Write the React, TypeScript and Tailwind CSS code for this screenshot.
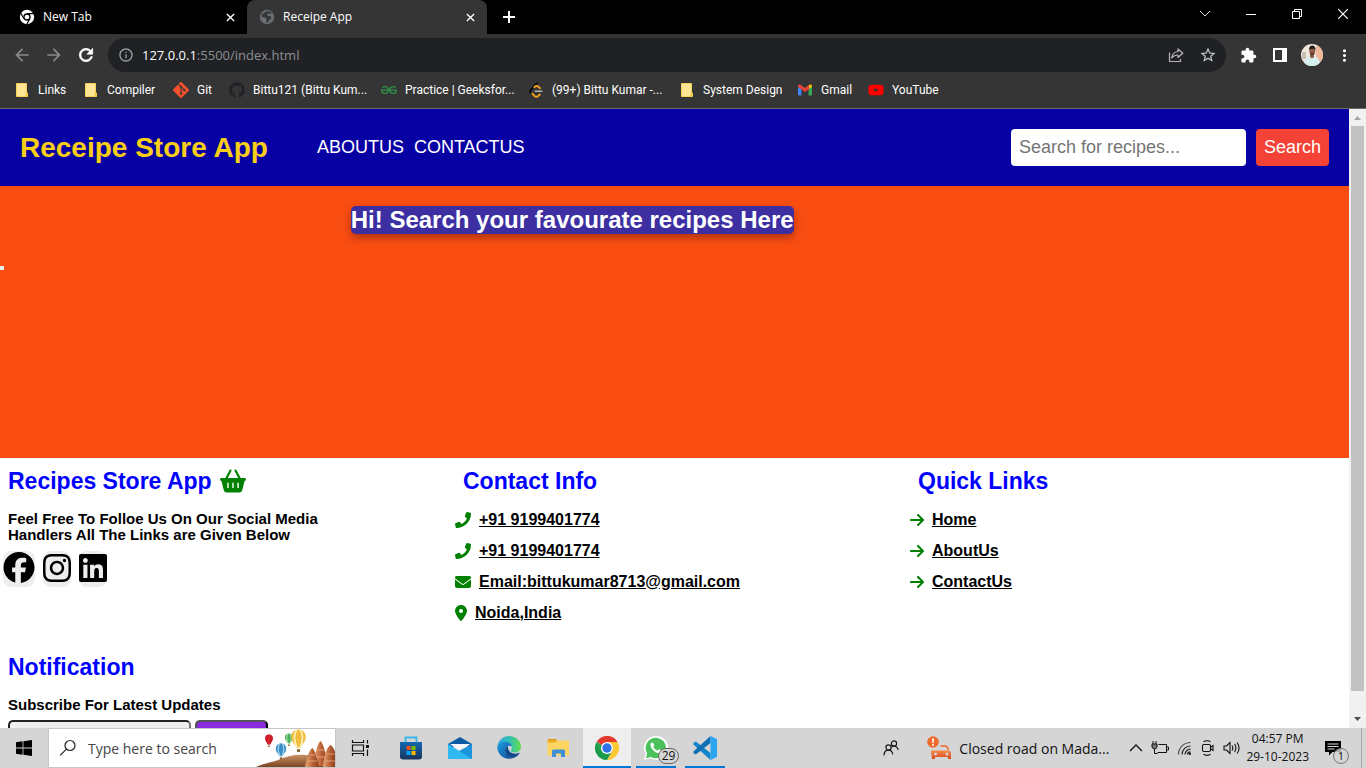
import type { ReactNode } from "react";
import { FaPhone } from "react-icons/fa";
import {
  FaArrowRight,
  FaBasketShopping,
  FaEnvelope,
  FaFacebook,
  FaGithub,
  FaInstagram,
  FaLinkedin,
  FaLocationDot,
  FaYoutube,
} from "react-icons/fa6";
import {
  MdArrowBack,
  MdArrowForward,
  MdExtension,
  MdMoreVert,
  MdOutlineInfo,
  MdStarOutline,
} from "react-icons/md";
import { SiGeeksforgeeks, SiGit } from "react-icons/si";

/* ---------- Icons ---------- */

function ChromeMono() {
  return (
    <svg viewBox="0 0 16 16" className="size-4">
      <circle cx="8" cy="8" r="7.2" fill="#fff" />
      <circle cx="8" cy="8" r="3" fill="#fff" stroke="#000" strokeWidth="1.3" />
      <path d="M8 4.6h6.6M5 9.8 1.8 4.2M10.9 9.8 7.8 15.2" stroke="#000" strokeWidth="1.2" />
    </svg>
  );
}

function Globe() {
  return (
    <svg viewBox="0 0 16 16" className="size-4">
      <circle cx="8" cy="8" r="7.2" fill="#6a6e73" />
      <path
        d="M7 2.2 4.6 4.4 2.8 5v3l3 .2 1.6 1.6.2 3.8 1.2.2 1-2.4 2.6-2.2-1-2-2.6-.4-1.2-1 1.6-1.2 2.4.2 1.2-1.4-2-1z"
        fill="#35363a"
      />
    </svg>
  );
}

function Cross({ className }: { className: string }) {
  return (
    <svg viewBox="0 0 10 10" className={className} fill="none" stroke="currentColor">
      <path d="m1 1 8 8M9 1 1 9" />
    </svg>
  );
}

function ReloadIcon() {
  return (
    <svg viewBox="0 0 24 24" className="size-[20px]" fill="#fff" stroke="#fff" strokeWidth=".8">
      <path d="M17.650 6.350A7.958 7.958 0 0 0 12 4c-4.420 0-7.990 3.580-7.990 8s3.570 8 7.990 8c3.730 0 6.840-2.550 7.730-6h-2.080A5.990 5.990 0 0 1 12 18c-3.310 0-6-2.690-6-6s2.690-6 6-6c1.660 0 3.140.690 4.220 1.780L13 11h7V4z" />
    </svg>
  );
}

function FolderSheet() {
  return (
    <svg viewBox="0 0 16 16" className="size-4">
      <path d="M2.5 1.5h10v9.5h1v3.500H2.500z" fill="#ffe694" stroke="#f5d35c" />
      <path d="M11.500 14.500v-3l2-1v4z" fill="#f3c93f" />
    </svg>
  );
}

function LeetCode() {
  return (
    <svg viewBox="0 0 16 16" className="size-4" fill="none" strokeLinecap="round" strokeWidth="1.9">
      <path d="M9.200 1.200 3 7.600c-1.100 1.100-1.100 2.300 0 3.400l.8.8" stroke="#0c0c0c" />
      <path d="M6.400 5.200c1.600-1.600 3-1.400 4.200-.3l1.300 1.300M4.200 11.600l2.300 2.300c1.200 1 2.600 1 3.800 0l1.500-1.400" stroke="#f8a11c" />
      <path d="M7.200 9.200h6.600" stroke="#b5b5b5" strokeWidth="1.500" />
    </svg>
  );
}

function Gmail() {
  return (
    <svg viewBox="0 0 16 16" className="size-4">
      <path d="M1 4.500 4.400 7v6.500H2a1 1 0 0 1-1-1z" fill="#4285f4" />
      <path d="M15 4.500 11.600 7v6.500H14a1 1 0 0 0 1-1z" fill="#34a853" />
      <path d="M11.600 3.400V7.200L15 4.700V4c0-1.500-1.500-2-2.500-1.300z" fill="#fbbc04" />
      <path d="M1 4c0-1.500 1.500-2 2.500-1.300L8 6l4-3v4L8 10 4.400 7.200 1 4.700z" fill="#ea4335" />
    </svg>
  );
}

function ShareIcon() {
  return (
    <svg viewBox="0 0 16 16" className="size-4" fill="none" stroke="#b4b6ba" strokeWidth="1.200">
      <path d="M1.500 5.500v9h11v-2.500" />
      <path d="M10 2v2.500C6 5 4 7.500 3.700 11 5.500 8.700 7.500 8 10 8v2.500l4.800-4.300z" strokeLinejoin="round" />
    </svg>
  );
}

function SidePanel() {
  return (
    <svg viewBox="0 0 14 14" className="size-[14px]">
      <path d="M0 0h14v14H0zM2 2v10h7V2z" fill="#fff" fillRule="evenodd" />
    </svg>
  );
}

function Avatar() {
  return (
    <svg viewBox="0 0 22 22" className="size-[22px] rounded-full">
      <rect width="22" height="22" fill="#f1e6dc" />
      <path d="M15 2h7v16h-7z" fill="#f1b79b" />
      <path d="M1 8h4v7H1z" fill="#c7bfb4" />
      <path d="M3 22c0-6 2-9 6-10h4c4 1 6 4 6 10z" fill="#d8eff0" />
      <path d="M9 9h4v4l-2 1.500L9 13z" fill="#8a5740" />
      <ellipse cx="11.300" cy="7" rx="3" ry="4" fill="#8f5b44" />
      <path d="M8 6c-.5-6 7-6 6.500 0-1-1.500-5-1.800-6.500 0z" fill="#1d1a1c" />
      <path d="M9.500 9.200h3.500v1.200H9.500z" fill="#3a2522" />
    </svg>
  );
}

function WindowsLogo() {
  return (
    <svg viewBox="0 0 16 16" className="size-4">
      <path d="M0 2.200 6.600 1.300V7.600H0zM7.400 1.200 16 0v7.600H7.400zM0 8.400h6.600v6.300L0 13.800zM7.400 8.400H16V16l-8.600-1.200z" fill="#000" />
    </svg>
  );
}

function SearchGlass() {
  return (
    <svg viewBox="0 0 18 18" className="size-[18px]" fill="none" stroke="#222" strokeWidth="1.200">
      <circle cx="11" cy="6.500" r="5" />
      <path d="m7.400 10.100-6.200 6.200" />
    </svg>
  );
}

function Balloon({ x, y, r, fill, stripe }: { x: number; y: number; r: number; fill: string; stripe: string }) {
  return (
    <g transform={`translate(${x} ${y}) scale(${r})`}>
      <path d="M-1-.1a1 1 0 0 1 2 0C1 .6.500.9.250 1.400h-.5C-.5.9-1 .6-1-.1z" fill={fill} />
      <path d="M-.25-1.050c-.5.800-.3 1.700.05 2.450M.25-1.050c.5.800.3 1.700-.05 2.450" stroke={stripe} strokeWidth=".22" fill="none" />
      <path d="M-.22 1.600h.44v.4h-.44z" fill="#8a6a35" />
    </g>
  );
}

function BalloonScene() {
  return (
    <svg viewBox="0 0 80 38" className="h-[38px] w-20 shrink-0">
      <defs>
        <linearGradient id="hill" x1="0" y1="0" x2="0" y2="1">
          <stop offset="0" stopColor="#c99263" />
          <stop offset="1" stopColor="#7b4526" />
        </linearGradient>
        <linearGradient id="rock" x1="0" y1="0" x2="1" y2="0">
          <stop offset="0" stopColor="#e8a878" />
          <stop offset=".55" stopColor="#bb6236" />
          <stop offset="1" stopColor="#8c3f20" />
        </linearGradient>
      </defs>
      <path d="M1 38c8-4 14-4 22-7 9-4 17-6 28-5h29v12z" fill="url(#hill)" />
      <path d="M58 37c2-14 5-23 7.500-25 2.500 2 5.500 12 7.500 25z" fill="url(#rock)" />
      <path d="M68 38c1-12 4-20 7.500-22 2 1 3.500 4 4.500 7v15z" fill="url(#rock)" />
      <path d="M50 38c2-11 5-18 7.500-19 2.500 2 5 12 6.500 19z" fill="url(#rock)" />
      <path d="M55 26h6M62 21h8M61 28h10M71 25h9M53 32h9M70 32h10" stroke="#f0b98e" strokeWidth=".7" />
      <Balloon x={14} y={10} r={4} fill="#d8222c" stripe="#b51420" />
      <Balloon x={34} y={9} r={4} fill="#4bb05a" stripe="#c6ecc2" />
      <Balloon x={26} y={20} r={5.200} fill="#3d8fc8" stripe="#a9d6ef" />
      <Balloon x={43.500} y={8.500} r={7.300} fill="#f0bd3d" stripe="#fff1bd" />
    </svg>
  );
}

function TaskView() {
  return (
    <svg viewBox="0 0 18 16" className="h-4 w-[18px]" fill="none" stroke="#111" strokeWidth="1.200">
      <path d="M1.500 0v2.500h11V0M1.500 16v-2.500h11V16M1.500 5h11v6h-11zM16.500 0v3.500M16.500 9.500V16" />
      <path d="M15 5h3v3h-3z" fill="#111" stroke="none" />
    </svg>
  );
}

function StoreIcon() {
  return (
    <svg viewBox="0 0 24 24" className="size-6">
      <defs>
        <linearGradient id="bag" x1="0" y1="0" x2="0" y2="1">
          <stop offset="0" stopColor="#1468b2" />
          <stop offset="1" stopColor="#19345d" />
        </linearGradient>
      </defs>
      <path d="M6.500 7V1.500h11V7" fill="none" stroke="#3ab6ea" strokeWidth="1.800" />
      <path d="M1 6h22v14.500a3 3 0 0 1-3 3H4a3 3 0 0 1-3-3z" fill="url(#bag)" />
      <path d="M7.500 10h4v4h-4z" fill="#f25022" />
      <path d="M12.500 10h4v4h-4z" fill="#7fba00" />
      <path d="M7.500 15h4v4h-4z" fill="#00a4ef" />
      <path d="M12.500 15h4v4h-4z" fill="#ffb900" />
    </svg>
  );
}

function MailIcon() {
  return (
    <svg viewBox="0 0 24 24" className="size-6">
      <path d="M0 8 12 1l12 7v3H0z" fill="#0c59a4" />
      <path d="M2 8h20l-9 8z" fill="#f4f7f9" />
      <path d="M24 8v15H0l11-8z" fill="#1c94dd" />
      <path d="M0 8v15h24z" fill="#2fb9f2" />
    </svg>
  );
}

function EdgeIcon() {
  return (
    <svg viewBox="0 0 24 24" className="size-6">
      <defs>
        <linearGradient id="edgeTop" x1="0" y1=".4" x2="1" y2=".4">
          <stop offset="0" stopColor="#2aa5dc" />
          <stop offset=".55" stopColor="#35c1b0" />
          <stop offset="1" stopColor="#66dc4d" />
        </linearGradient>
        <linearGradient id="edgeLow" x1="0" y1="0" x2="1" y2="1">
          <stop offset="0" stopColor="#1f9bde" />
          <stop offset="1" stopColor="#0b4a9c" />
        </linearGradient>
      </defs>
      <path d="M.3 10.500C1.300 4.500 6 0 12 0c7.500 0 12 5.500 12 10.500 0 4-3 6-6.200 6-3.300 0-4.100-1.200-4.100-1.800 0-.7 1-1.200 1-3 0-2.600-2.400-4.600-5.400-4.600-4.500 0-7.500 1.900-9 3.400z" fill="url(#edgeTop)" />
      <path d="M.2 11C1.600 7.500 5 5.800 8.500 5.800c3.500 0 5.700 1.800 6.200 4.400C11 8.500 8 11 8 14.500c0 4.500 4 7.800 9 7.300A12 12 0 0 1 .2 11z" fill="url(#edgeLow)" />
      <path d="M11 9.800c-2 1-3 2.800-3 5 0 4.500 4 7.700 9 7 2.300-.8 4.300-2.500 5.500-4.500.2-.4-.2-.7-.6-.5-4.500 2.200-11.500.2-10.900-7z" fill="#114a8b" />
    </svg>
  );
}

function ExplorerIcon() {
  return (
    <svg viewBox="0 0 24 24" className="size-6">
      <path d="M2 3h8l1.500 2H2z" fill="#dc9a10" />
      <path d="M1.500 4.500h20.500a1 1 0 0 1 1 1v14H1.500z" fill="#fcd462" />
      <path d="M1.500 4.500H11L9 6.500H1.500z" fill="#e8a91d" />
      <path d="M6 21v-6a1.500 1.500 0 0 1 1.500-1.500h10A1.500 1.500 0 0 1 19 15v6h-4v-3.500h-5V21z" fill="#3f8fd2" />
    </svg>
  );
}

function ChromeIcon() {
  return (
    <svg viewBox="0 0 24 24" className="size-6">
      <path d="M12 12 1.600 6A12 12 0 0 1 22.400 6z" fill="#e33b2e" />
      <path d="M12 12V6h10.400A12 12 0 0 1 12 24l5.200-9z" fill="#fcc934" />
      <path d="M12 12l5.200 3L12 24A12 12 0 0 1 1.600 6l5.200 9z" fill="#1e9b4b" />
      <path d="M1.600 6 6.800 15 12 12z" fill="#1e9b4b" />
      <path d="M12 0A12 12 0 0 1 22.400 6H12L6.800 9 4 4a12 12 0 0 1 8-4z" fill="#e33b2e" />
      <circle cx="12" cy="12" r="6" fill="#fff" />
      <circle cx="12" cy="12" r="4.700" fill="#2f72e8" />
    </svg>
  );
}

function WhatsAppIcon() {
  return (
    <svg viewBox="0 0 24 24" className="size-6">
      <path d="M0 24l1.700-6.200A12 12 0 1 1 6.300 22.300z" fill="#fff" />
      <path d="M1.900 22.200l1.300-4.800a10.200 10.200 0 1 1 3.700 3.500z" fill="#4bc15c" />
      <path d="M8.200 6.500c-.8 0-2 1.300-1.700 3 .6 3.300 4.500 7.400 8.400 7.800 1.600.1 2.800-.9 2.900-2.300 0-.5-2.600-1.900-3-1.700-.5.200-1 1.400-1.500 1.300-1.700-.6-3.300-2.200-4-3.900 0-.4 1-1 1-1.500 0-.4-1-2.700-2.100-2.700z" fill="#fff" />
    </svg>
  );
}

function VSCodeIcon() {
  return (
    <svg viewBox="0 0 24 24" className="size-6">
      <path d="M17.500 24v-7L2.800 5.600.4 6.900v1.700z" fill="#1484cc" />
      <path d="M17.500 0v7L2.800 18.400.4 17.100v-1.700z" fill="#0f6fb5" />
      <path d="M17.500 0 24 3v18l-6.500 3z" fill="#2aa6f2" />
    </svg>
  );
}

function People() {
  return (
    <svg viewBox="0 0 16 16" className="size-4" fill="none" stroke="#1c1c1c" strokeWidth="1.200">
      <circle cx="5.500" cy="7.500" r="2.600" />
      <path d="M1 15.500c0-3.200 1.800-5.300 4.500-5.300 2.700 0 4 2 4.200 4.300" />
      <circle cx="11" cy="3.500" r="2.600" />
      <path d="M8.500 7c3-2 6.300-.3 6.700 3" />
    </svg>
  );
}

function TrafficIcon() {
  return (
    <svg viewBox="0 0 24 24" className="size-6">
      <defs>
        <linearGradient id="car" x1="0" y1="0" x2="0" y2="1">
          <stop offset="0" stopColor="#f58a4b" />
          <stop offset="1" stopColor="#d9471b" />
        </linearGradient>
      </defs>
      <circle cx="6" cy="6" r="5.800" fill="#ee6a2c" />
      <path d="M5 2.500h2l-.4 4.700H5.400z" fill="#fff" />
      <circle cx="6" cy="8.900" r="1" fill="#fff" />
      <path d="M13.500 10h5c1.500 0 2.200 1 2.700 4" fill="none" stroke="#ee6a2c" strokeWidth="1.600" />
      <path d="M4 14.500h17.500c1.500 0 2.500 1.200 2.500 2.500v6h-3v-2H8v2H5z" fill="url(#car)" />
      <circle cx="8.500" cy="18" r="1.600" fill="#d5d5d5" />
      <circle cx="20" cy="18" r="1.600" fill="#d5d5d5" />
    </svg>
  );
}

function Battery() {
  return (
    <svg viewBox="0 0 18 16" className="h-4 w-[18px]" fill="none" stroke="#111">
      <path d="M7.500 4.500h8v8H6.500" />
      <path d="M16 7h1.500v3H16" />
      <path d="M2 1v3M5 1v3M3.500 9v4.500h3" />
      <path d="M1 4h5v3L4.500 9h-2L1 7z" fill="#777" />
    </svg>
  );
}

function WifiIcon() {
  return (
    <svg viewBox="0 0 16 16" className="size-4" fill="none" stroke="#222" strokeWidth="1.200">
      <path d="M1.500 14.500C1.500 7.500 7 2.500 13.500 2.500" stroke="#555" />
      <path d="M5 14.500C5 9.500 9 6 13.500 6M8 14.500c0-3 2.500-5.300 5.500-5.300M10.500 14.500c0-1.500 1.200-2.700 3-2.700" />
      <circle cx="12.800" cy="13.800" r="1.200" fill="#111" stroke="none" />
    </svg>
  );
}

function MeetNow() {
  return (
    <svg viewBox="0 0 14 16" className="h-4 w-[14px]" fill="none" stroke="#111" strokeWidth="1.100">
      <rect x="1.500" y="4.500" width="8" height="7" rx="1.500" />
      <path d="m9.500 7.200 2.500-1.700v5L9.500 8.800M2.500 1.800c1.500-1.500 5.500-1.500 7 0M2.500 14.200c1.500 1.500 5.500 1.500 7 0" />
    </svg>
  );
}

function Speaker() {
  return (
    <svg viewBox="0 0 18 16" className="h-4 w-[18px]" fill="none" stroke="#111" strokeWidth="1.100">
      <path d="M1 6h2.500L7 2.500v11L3.500 10H1zM9 5.500c1 1.500 1 3.500 0 5M11.500 4c1.700 2.400 1.700 5.600 0 8M14 2.500c2.500 3.300 2.500 7.700 0 11" />
    </svg>
  );
}

function NotificationIcon() {
  return (
    <svg viewBox="0 0 16 16" className="size-4">
      <path d="M0 1h16v11h-8.500L4 15.500V12H0z" fill="#000" />
      <path d="M2.500 4h11M2.500 6.500h11M2.500 9h7" stroke="#d5d5d5" />
    </svg>
  );
}

/* ---------- Browser window ---------- */

function Tab({ title, icon, active = false }: { title: string; icon: ReactNode; active?: boolean }) {
  return (
    <div
      className={
        active
          ? "flex w-60 items-center gap-2 rounded-t-lg bg-[#353535] px-3"
          : "flex w-60 items-center gap-2 px-3"
      }
    >
      {icon}
      <span className="grow text-[12px] text-white">{title}</span>
      <button type="button" aria-label={`Close ${title}`} className="text-white">
        <Cross className="size-[9px] stroke-[1.500]" />
      </button>
    </div>
  );
}

function TabStrip() {
  return (
    <div className="flex h-[34px] shrink-0 bg-black pl-[7px]">
      <Tab title="New Tab" icon={<ChromeMono />} />
      <Tab title="Receipe App" icon={<Globe />} active />
      <button type="button" aria-label="Open new tab" className="flex w-11 items-center justify-center">
        <svg viewBox="0 0 12 12" className="size-3" stroke="#fff" strokeWidth="2">
          <path d="M6 0v12M0 6h12" />
        </svg>
      </button>
      <div className="ml-auto flex h-7 text-white">
        <button type="button" aria-label="Tab search" className="flex w-[46px] items-center justify-center">
          <svg viewBox="0 0 12 8" className="h-2 w-3" fill="none" stroke="#ddd">
            <path d="m1 1 5 5 5-5" />
          </svg>
        </button>
        <button type="button" aria-label="Minimize" className="flex w-[46px] items-center justify-center">
          <span className="h-px w-[10px] bg-white" />
        </button>
        <button type="button" aria-label="Restore" className="flex w-[46px] items-center justify-center">
          <svg viewBox="0 0 10 10" className="size-[10px]" fill="none" stroke="#fff">
            <path d="M.5 2.500h7v7h-7zM2.500 2.500v-2h7v7h-2" />
          </svg>
        </button>
        <button type="button" aria-label="Close window" className="flex w-[46px] items-center justify-center">
          <Cross className="size-3" />
        </button>
      </div>
    </div>
  );
}

function ToolButton({ label, children }: { label: string; children: ReactNode }) {
  return (
    <button type="button" aria-label={label} className="flex w-8 items-center justify-center text-white">
      {children}
    </button>
  );
}

function Toolbar() {
  return (
    <div className="flex h-[42px] shrink-0 items-center bg-[#353535] px-[6px]">
      <ToolButton label="Back">
        <MdArrowBack className="size-[20px] text-[#8a8a8a]" />
      </ToolButton>
      <ToolButton label="Forward">
        <MdArrowForward className="size-[20px] text-[#8a8a8a]" />
      </ToolButton>
      <ToolButton label="Reload">
        <ReloadIcon />
      </ToolButton>
      <div className="mx-[6px] flex h-[34px] grow items-center rounded-full bg-[#202124] pr-[2px] pl-[10px]">
        <MdOutlineInfo className="size-4 text-[#9aa0a6]" />
        <p className="grow pt-px pl-2 text-[13px] text-[#8d8f93]">
          <span className="text-white">127.0.0.1</span>:5500/index.html
        </p>
        <ToolButton label="Share">
          <ShareIcon />
        </ToolButton>
        <ToolButton label="Bookmark this tab">
          <MdStarOutline className="size-[18px] text-[#c4c7cb]" />
        </ToolButton>
      </div>
      <ToolButton label="Extensions">
        <MdExtension className="size-[17px]" />
      </ToolButton>
      <ToolButton label="Side panel">
        <SidePanel />
      </ToolButton>
      <ToolButton label="Profile">
        <Avatar />
      </ToolButton>
      <ToolButton label="Menu">
        <MdMoreVert className="size-[19px]" />
      </ToolButton>
    </div>
  );
}

const bookmarks: { label: string; icon: ReactNode; width: string }[] = [
  { label: "Links", icon: <FolderSheet />, width: "w-[69px]" },
  { label: "Compiler", icon: <FolderSheet />, width: "w-[90px]" },
  { label: "Git", icon: <SiGit className="size-4 text-[#f4512c]" />, width: "w-14" },
  { label: "Bittu121 (Bittu Kum...", icon: <FaGithub className="size-4 text-[#1f2328]" />, width: "w-[152px]" },
  { label: "Practice | Geeksfor...", icon: <SiGeeksforgeeks className="size-4 text-[#2f8d46]" />, width: "w-[147px]" },
  { label: "(99+) Bittu Kumar -...", icon: <LeetCode />, width: "w-[151px]" },
  { label: "System Design", icon: <FolderSheet />, width: "w-[118px]" },
  { label: "Gmail", icon: <Gmail />, width: "w-[71px]" },
  { label: "YouTube", icon: <FaYoutube className="size-4 text-[#ff0000]" />, width: "w-20" },
];

function BookmarkBar() {
  return (
    <nav
      aria-label="Bookmarks"
      className="flex h-[33px] shrink-0 items-center border-b border-[#6a6a6a] bg-[#353535] pb-1 pl-[14px]"
    >
      {bookmarks.map((b) => (
        <a
          key={b.label}
          href="#"
          className={`flex items-center gap-2 font-[Roboto,sans-serif] text-[12px] whitespace-nowrap text-white ${b.width}`}
        >
          {b.icon}
          {b.label}
        </a>
      ))}
    </nav>
  );
}

/* ---------- Web page ---------- */

function SiteHeader() {
  return (
    <header className="flex items-center bg-[#0700a3] p-5">
      <h1 className="text-[28px] leading-8 font-bold text-[#f8cf16]">Receipe Store App</h1>
      <nav className="ml-[49px] flex gap-[10px] text-[18px] text-white">
        <a href="#">ABOUTUS</a>
        <a href="#">CONTACTUS</a>
      </nav>
      <form className="ml-auto flex gap-[10px] text-[18px]">
        <input
          type="text"
          aria-label="Search for recipes"
          placeholder="Search for recipes..."
          className="h-[37px] w-[235px] rounded bg-white px-2 placeholder:text-[#757575]"
        />
        <button type="button" className="h-[37px] rounded bg-[#f44336] px-2 text-white">
          Search
        </button>
      </form>
    </header>
  );
}

function Heading({ children }: { children: ReactNode }) {
  return (
    <h3 className="flex items-center gap-2 px-2 text-[23px] leading-[26px] font-bold text-[#0000ff]">
      {children}
    </h3>
  );
}

function IconLink({ icon, label }: { icon: ReactNode; label: string }) {
  return (
    <li className="flex h-[31px] items-center gap-2 text-[16px] font-bold text-[#008000]">
      {icon}
      <a href="#" className="text-black underline">
        {label}
      </a>
    </li>
  );
}

const socials = [
  { label: "Facebook", icon: <FaFacebook className="h-[31px] w-8" /> },
  { label: "Instagram", icon: <FaInstagram className="h-8 w-7" /> },
  { label: "LinkedIn", icon: <FaLinkedin className="h-8 w-7" /> },
];

function SiteFooter() {
  return (
    <footer className="grid grid-cols-3 gap-x-4 gap-y-[26px] bg-white pt-[10px]">
      <section>
        <Heading>
          Recipes Store App
          <FaBasketShopping className="h-6 w-[26px] text-[#008000]" />
        </Heading>
        <p className="mt-[17px] px-2 text-[15px] leading-4 font-bold">
          Feel Free To Folloe Us On Our Social Media
          <br />
          Handlers All The Links are Given Below
        </p>
        <div className="mt-2 flex gap-2 pl-[3px]">
          {socials.map((s) => (
            <a key={s.label} href="#" aria-label={s.label} className="rounded-lg bg-[#eee] pt-px pb-[3px]">
              {s.icon}
            </a>
          ))}
        </div>
      </section>
      <section>
        <Heading>Contact Info</Heading>
        <ul className="mt-[10px]">
          <IconLink icon={<FaPhone className="size-4" />} label="+91 9199401774" />
          <IconLink icon={<FaPhone className="size-4" />} label="+91 9199401774" />
          <IconLink icon={<FaEnvelope className="size-4" />} label="Email:bittukumar8713@gmail.com" />
          <IconLink icon={<FaLocationDot className="h-4 w-3" />} label="Noida,India" />
        </ul>
      </section>
      <section>
        <Heading>Quick Links</Heading>
        <ul className="mt-[10px]">
          <IconLink icon={<FaArrowRight className="h-4 w-[14px]" />} label="Home" />
          <IconLink icon={<FaArrowRight className="h-4 w-[14px]" />} label="AboutUs" />
          <IconLink icon={<FaArrowRight className="h-4 w-[14px]" />} label="ContactUs" />
        </ul>
      </section>
      <section>
        <Heading>Notification</Heading>
        <label htmlFor="subscribe-email" className="mt-[17px] block px-2 text-[15px] leading-4 font-bold">
          Subscribe For Latest Updates
        </label>
        <div className="mt-[7px] flex gap-1 pl-2">
          <input
            id="subscribe-email"
            type="email"
            className="h-[34px] w-[183px] rounded-[5px] border-2 border-[#767676] border-t-[#222] border-l-[#222] bg-[#eee] px-2"
          />
          <button
            type="button"
            aria-label="Subscribe"
            className="h-[34px] w-[73px] rounded-[5px] border-2 border-black border-t-[#555] border-l-[#555] bg-[#8a2be2]"
          />
        </div>
      </section>
    </footer>
  );
}

function Scrollbar() {
  return (
    <div aria-hidden="true" className="flex w-[17px] shrink-0 flex-col items-center bg-[#f1f1f1]">
      <svg viewBox="0 0 17 17" className="size-[17px]">
        <path d="M5 11h7L8.500 7z" fill="#a3a3a3" />
      </svg>
      <div className="w-[13px] grow bg-[#c1c1c1]" />
      <div className="h-5" />
      <svg viewBox="0 0 17 17" className="size-[17px]">
        <path d="M5 6h7L8.500 10z" fill="#505050" />
      </svg>
    </div>
  );
}

function RecipePage() {
  return (
    <div className="flex min-h-0 grow font-['Liberation_Sans',Arial,sans-serif] text-black">
      <div className="grow overflow-hidden">
        <SiteHeader />
        <main className="min-h-[272px] bg-[#fa4d12] pt-5">
          <h2 className="ml-[26%] w-fit rounded-[5px] bg-[#3d2fa2] text-[24px] leading-7 font-bold text-white shadow-[0_4px_8px_rgba(0,0,0,0.3)]">
            Hi! Search your favourate recipes Here
          </h2>
          <div className="mt-8 size-1 bg-[#eee]" />
        </main>
        <SiteFooter />
      </div>
      <Scrollbar />
    </div>
  );
}

/* ---------- Desktop taskbar ---------- */

type AppState = "closed" | "open" | "current";

const apps: { name: string; icon: ReactNode; state: AppState; badge?: string }[] = [
  { name: "Microsoft Store", icon: <StoreIcon />, state: "closed" },
  { name: "Mail", icon: <MailIcon />, state: "closed" },
  { name: "Microsoft Edge", icon: <EdgeIcon />, state: "closed" },
  { name: "File Explorer", icon: <ExplorerIcon />, state: "closed" },
  { name: "Google Chrome", icon: <ChromeIcon />, state: "current" },
  { name: "WhatsApp", icon: <WhatsAppIcon />, state: "open", badge: "29" },
  { name: "Visual Studio Code", icon: <VSCodeIcon />, state: "open" },
];

const appStyles: Record<AppState, string> = {
  closed: "border-transparent w-12",
  current: "border-[#0078d7] bg-[#eee] w-12",
  open: "border-[#0078d7] w-10 mx-1",
};

function Taskbar() {
  return (
    <footer className="flex h-10 shrink-0 items-stretch bg-[#d5d5d5] text-[#111]">
      <button type="button" aria-label="Start" className="flex w-12 items-center justify-center">
        <WindowsLogo />
      </button>
      <div className="flex w-72 items-center border border-[#c6c6c6] bg-white pl-[10px]">
        <SearchGlass />
        <input
          type="text"
          aria-label="Type here to search"
          placeholder="Type here to search"
          className="ml-[11px] w-0 grow text-[14px] placeholder:text-[#444]"
        />
        <BalloonScene />
      </div>
      <button type="button" aria-label="Task view" className="flex w-12 items-center justify-center">
        <TaskView />
      </button>
      <div className="ml-[3px] flex gap-px">
        {apps.map((app) => (
          <button
            key={app.name}
            type="button"
            aria-label={app.name}
            className={`relative flex items-center justify-center border-b-2 pt-[2px] ${appStyles[app.state]}`}
          >
            {app.icon}
            {app.badge && (
              <span className="absolute -right-[3px] bottom-[2px] w-[21px] rounded-full border border-[#666] bg-[#d5d5d5] text-center text-[12px] leading-[14px]">
                {app.badge}
              </span>
            )}
          </button>
        ))}
      </div>
      <div className="ml-auto flex items-center">
        <People />
        <div className="ml-7 flex items-center gap-2 text-[14px]">
          <TrafficIcon />
          Closed road on Mada...
        </div>
        <div className="ml-5 flex items-center gap-2">
          <svg viewBox="0 0 14 8" className="h-2 w-[14px]" fill="none" stroke="#111" strokeWidth="1.300">
            <path d="m1 7 6-6 6 6" />
          </svg>
          <Battery />
          <WifiIcon />
          <MeetNow />
          <Speaker />
        </div>
        <div className="ml-[5px] text-center text-[12px] leading-[18px]">
          04:57 PM
          <br />
          29-10-2023
        </div>
        <button type="button" aria-label="Notifications" className="relative mr-3 ml-4 flex size-6 items-center">
          <NotificationIcon />
          <span className="absolute right-0 -bottom-1 size-4 rounded-full border border-[#777] bg-[#d5d5d5]/80 text-center text-[11px] leading-[14px]">
            1
          </span>
        </button>
        <span className="mr-1 h-10 w-px bg-[#aaa]" />
      </div>
    </footer>
  );
}

export default function App() {
  return (
    <div className="flex h-screen flex-col overflow-hidden font-['Open_Sans',sans-serif]">
      <TabStrip />
      <Toolbar />
      <BookmarkBar />
      <RecipePage />
      <Taskbar />
    </div>
  );
}
